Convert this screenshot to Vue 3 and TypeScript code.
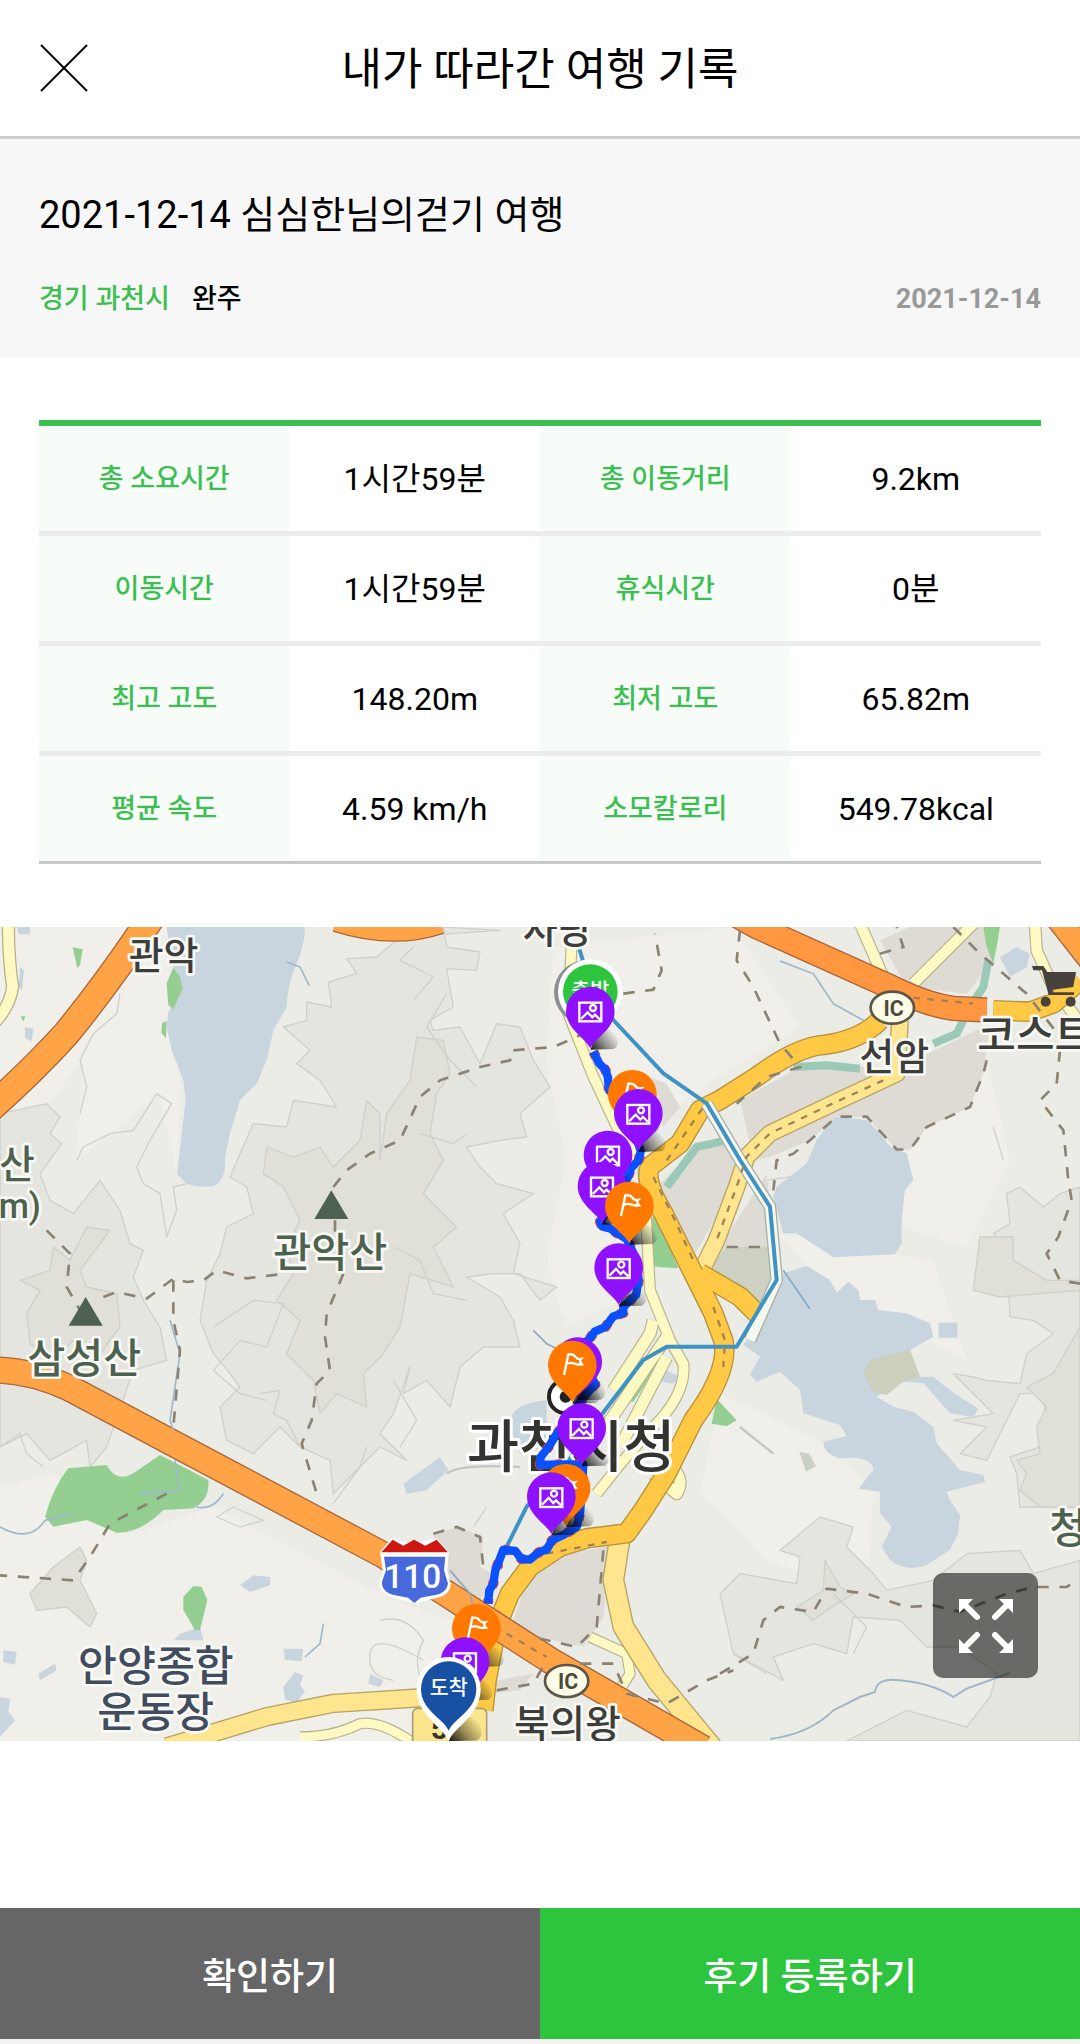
<script setup lang="ts">
interface Stat {
  label: string
  value: string
}

type PinKind = 'photo' | 'flag'

interface Pin {
  kind: PinKind
  x: number
  y: number
}

const stats: [Stat, Stat][] = [
  [{ label: '총 소요시간', value: '1시간59분' }, { label: '총 이동거리', value: '9.2km' }],
  [{ label: '이동시간', value: '1시간59분' }, { label: '휴식시간', value: '0분' }],
  [{ label: '최고 고도', value: '148.20m' }, { label: '최저 고도', value: '65.82m' }],
  [{ label: '평균 속도', value: '4.59 km/h' }, { label: '소모칼로리', value: '549.78kcal' }],
]

// Tip of each pin, in map units, in painting order
const pins: Pin[] = [
  { kind: 'photo', x: 1771, y: 364 },
  { kind: 'flag', x: 1897, y: 614 },
  { kind: 'photo', x: 1915, y: 671 },
  { kind: 'photo', x: 1824, y: 796 },
  { kind: 'photo', x: 1806, y: 889 },
  { kind: 'flag', x: 1888, y: 949 },
  { kind: 'photo', x: 1856, y: 1134 },
  { kind: 'photo', x: 1733, y: 1416 },
  { kind: 'flag', x: 1717, y: 1426 },
  { kind: 'photo', x: 1745, y: 1614 },
  { kind: 'flag', x: 1698, y: 1796 },
  { kind: 'photo', x: 1654, y: 1821 },
  { kind: 'flag', x: 1429, y: 2216 },
  { kind: 'photo', x: 1395, y: 2316 },
]

const route =
  'M1780 374 L1798 410 1816 428 1824 452 1826 484 1850 520 1900 600 1922 672 1916 700 1894 722 1884 750 1850 810 1800 884 1806 898 1830 904 1850 918 1880 936 1910 1000 1916 1060 1908 1104 1870 1140 1870 1158 1840 1168 1816 1200 1784 1214 1768 1236 1740 1260 1750 1300 1786 1372 1760 1400 1700 1480 1664 1530 1646 1560 1622 1590 1620 1614 1680 1612 1750 1612 1746 1680 1740 1760 1730 1800 1690 1824 1656 1840 1640 1868 1616 1876 1590 1898 1564 1896 1546 1872 1510 1868 1498 1900 1486 1930 1480 1970 1468 1990 1464 2030'
</script>

<template>
  <div class="page">
    <header class="top">
      <button class="close" type="button" aria-label="닫기">
        <svg viewBox="0 0 48 48" aria-hidden="true"><path d="M1 1L47 47M47 1L1 47" /></svg>
      </button>
      <h1>내가 따라간 여행 기록</h1>
    </header>

    <section class="summary">
      <h2>2021-12-14 심심한님의걷기 여행</h2>
      <div class="meta">
        <span class="region">경기 과천시</span>
        <span class="state">완주</span>
        <time datetime="2021-12-14">2021-12-14</time>
      </div>
    </section>

    <table class="stats">
      <tbody>
        <tr v-for="(row, i) in stats" :key="i">
          <template v-for="cell in row" :key="cell.label">
            <th scope="row">{{ cell.label }}</th>
            <td>{{ cell.value }}</td>
          </template>
        </tr>
      </tbody>
    </table>

    <section class="map" aria-label="이동 경로">
      <svg class="canvas" viewBox="0 0 3240 2442">
        <defs>
          <linearGradient id="shade" x1="0" y1="1" x2="1" y2="0.4">
            <stop offset="0" stop-color="#000" stop-opacity="0.9" />
            <stop offset="0.5" stop-color="#000" stop-opacity="0.4" />
            <stop offset="1" stop-color="#000" stop-opacity="0" />
          </linearGradient>
          <path id="drop" d="M0 0C-12 -28 -73 -58 -73 -112A73 73 0 1 1 73 -112C73 -58 12 -28 0 0Z" />
          <path id="cast" d="M0 4L70 2Q92 -10 76 -40Q60 -58 40 -60L20 -44Z" fill="url(#shade)" />
        </defs>
        <rect width="3240" height="2442" fill="#ebece6" />

        <!-- lowland tints -->
        <g fill="#f1efea">
          <path d="M0 0H500L520 260 540 480 530 740 480 500 300 640 230 700 250 400 120 560 0 580Z" />
          <path d="M1660 60L2200 0 2400 300 2140 460 1900 640 1900 1100 1700 1200 1640 1000 1700 700 1640 400Z" />
          <path d="M2700 600L2960 400 3030 700 2900 960 2700 900ZM2330 920L2800 1000 2900 1300 2500 1100Z" />
          <path d="M0 1680L160 1640 400 1820 640 1740 1140 2000 1400 2100 1300 2442H0Z" />
          <path d="M2160 1400L2500 1560 2620 1700 2600 2000 2300 1900 2100 1700Z" />
        </g>

        <!-- hills -->
        <g class="contour" fill="#e5e5df">
          <path d="M1500 10L1330 0 1340 60 1440 75 1430 130 1340 125 1360 240 1290 280 1300 310 1380 300 1440 410 1490 290 1560 300 1600 400 1650 480 1560 560 1580 630 1500 640 1400 660 1440 720 1490 770 1600 800 1510 860 1560 950 1540 1040 1670 1080 1620 1120 1560 1040 1480 1040 1400 1050 1500 1110 1540 1180 1560 1260 1450 1260 1380 1320 1350 1440 1280 1360 1210 1400 1230 1320 1180 1460 1140 1520 1220 1600 1140 1560 1080 1620 1000 1700 990 1600 900 1560 840 1500 760 1580 680 1540 660 1440 720 1380 690 1340 640 1280 600 1180 620 1060 660 980 680 900 760 860 740 780 690 750 720 680 760 590 860 600 880 520 1010 540 960 460 890 410 930 370 850 300 920 280 920 225 995 240 985 165 1070 140 1040 95 1130 90 1200 30Z" />
          <path d="M0 560L140 530 180 570 150 620 185 650 120 740 150 820 220 860 300 760 360 850 390 950 430 970 400 1050 430 1120 480 1200 500 1300 400 1330 320 1560 270 1620 260 1540 150 1600 80 1520 0 1560Z" />
          <path d="M2160 2000L2220 1940 2390 1970 2400 1890 2340 1870 2400 1820 2460 1770 2560 1800 2540 1860 2620 1940 2660 1990 2800 1960 2900 1880 3060 1870 3100 1940 3240 1900V2442H2540L2720 2350 2900 2400 2970 2310 2990 2240 2880 2160 2780 2160 2700 2080 2560 2070 2540 2180 2440 2150 2320 2190 2350 2260 2200 2180Z" />
          <path d="M2860 1340L2920 1350 2960 1360 3060 1370 3080 1280 3160 1220 3100 1180 3030 1170 3020 960 2980 920 3030 890 3020 800 3060 780 3130 840 3180 800 3240 780V1740H3060L3050 1640 3030 1590 3120 1560 3140 1400 3060 1400 2960 1600 2880 1580 2960 1500 2860 1480 2980 1460Z" />
        </g>
        <g class="contour" fill="#e0e0d9">
          <path d="M1140 700L1160 560 1230 460 1250 330 1330 340 1350 440 1310 500 1290 620 1330 700 1270 800 1370 900 1300 960 1360 1080 1230 1040 1200 1200 1150 1280 1090 1340 1100 1440 1010 1400 960 1460 940 1360 860 1280 900 1180 830 1120 880 1040 860 960 900 880 850 780 790 740 800 660 880 690 960 660 1000 720 1080 640 1100 520 1140 560Z" />
          <path d="M80 1160L120 1090 60 1060 150 1030 160 960 210 1000 260 900 330 910 240 1030 260 1080 350 1100 360 1200 300 1280 220 1240 160 1300 90 1250Z" />
          <path d="M2940 930L3040 930 3040 1000 3140 1060 3240 1060V1090L3000 1110 2960 1100 2920 1090Z" />
          <path d="M3080 1380L3160 1340 3240 1200V1740L3120 1740 3060 1690 3080 1640 3050 1600 3120 1580 3110 1500 3140 1440Z" />
          <path d="M90 2000L160 1920 240 1860 260 1900 240 1960 290 2060 270 2100 200 2040 110 2050Z" />
          <path d="M2470 1990L2475 1900 2520 1980 2560 2000 2480 2050 2440 2080 2390 2040Z" />
        </g>
        <g class="contour" fill="none">
          <path d="M240 560L260 480 240 400 280 320 350 260 360 200M230 700L250 660 330 620 400 610 470 500 515 530 450 640 410 720 430 770 480 800 500 930 530 850 520 780 560 770" />
          <path d="M1340 200L1280 300 1350 400 1430 480M1260 620L1360 650 1400 620M1180 960L1260 1000 1300 1100 1400 1120M1420 1800L1460 1740M1240 220L1300 150 1200 100 1240 60" />
          <path d="M640 1200L760 1120 850 1130 800 1260 720 1240 640 1330 720 1400 800 1420M0 1560L60 1520 80 1580 130 1620M1000 1730L1080 1620 1100 1560M650 1770L700 1740 790 1780 720 1800Z" />
          <path d="M900 1560L860 1480 820 1460 840 1390 780 1400M1180 1360L1250 1480 1200 1560M2200 2180L2300 2240M2980 600L3010 700" />
          <path d="M2300 760L2430 740M2500 2000L2600 2100 2560 2180M1270 2200Q1100 2100 1110 2200Q1110 2250 1180 2260M1140 2080Q1220 2060 1270 2140Q1230 2220 1280 2280" />
        </g>

        <!-- water -->
        <g fill="#c8d5df">
          <path d="M500 0L915 0Q915 50 890 110Q862 170 860 240L820 310 800 400 770 470 720 520 690 620 675 690Q680 762 640 777Q600 784 560 770L532 742 545 620 557 520 550 460 515 370 500 300 505 255 545 190 520 120Z" />
          <path d="M2505 569L2600 579 2640 619 2670 659 2720 679 2740 759 2715 789 2705 879 2705 949 2685 982 2500 991 2390 919 2350 919 2320 809 2330 779 2420 709 2450 639Z" />
          <path d="M2350 1039L2420 1017 2490 1059 2510 1097 2545 1064 2575 1089 2580 1119 2625 1119 2635 1149 2720 1159 2790 1189 2800 1229 2730 1269 2760 1349 2800 1349 2850 1390 2935 1445 2920 1470 2850 1459 2770 1369 2710 1364 2630 1409 2680 1439 2740 1454 2800 1499 2810 1549 2880 1629 2950 1644 2955 1665 2840 1694 2850 1719 2880 1764 2875 1819 2850 1869 2780 1914Q2720 1938 2670 1899L2645 1859 2675 1799 2640 1759 2640 1694 2575 1685 2620 1629Q2615 1585 2520 1594Q2470 1580 2470 1544L2540 1527 2520 1494 2410 1459 2400 1389 2340 1334 2270 1364 2250 1344 2280 1289 2230 1254 2290 1169Z" />
          <path d="M2815 1187H2872V1232H2815ZM50 0H90V22H55ZM75 300l25 5-5 38-20-10ZM60 120l12 10-6 60-10-10Z" />
          <path d="M720 1975L760 1945 810 1950 810 1975 750 1995ZM10 2170l40 5-5 38-35-8ZM115 2240l50-30 5 20-50 30ZM850 2165l60 0-5 38-50-5ZM850 2280l35-45 25 10-10 30 15 18-25 35-35-10ZM0 2310l30 5-5 40 20 25-45 50ZM540 2120l60-20 10 40-90 0ZM1110 2240l40 20-10 20-35-10Z" />
          <path d="M1210 1670L1320 1590 1345 1630 1280 1690 1220 1700ZM1530 1500Q1520 1430 1640 1420L1640 1560 1560 1580ZM1950 1330l30-10 60 30-20 20-60-10ZM3000 90l50-30 40 20-10 40-50 30Z" />
        </g>
        <path d="M2730 1269L2760 1349 2710 1364 2660 1404 2620 1394 2590 1339 2610 1299Z" fill="#cdcfbd" />
        <path d="M2398 1574l30 6 20 38-30 16Z" fill="#cbcfc4" />

        <!-- built-up blocks -->
        <g fill="#dedbd5">
          <path d="M1980 770L2070 680 2180 620 2230 730 2080 990ZM2160 960L2300 740 2320 900 2330 1060 2280 1140 2110 1060Z" />
          <path d="M2220 520L2400 420 2700 420 2970 290 2950 440 2910 540 2780 600 2730 668 2690 667 2600 569 2510 569 2430 640 2310 690 2260 700Z" />
          <path d="M2640 40L2730 0 2960 0 2980 100 2900 200 2720 180ZM1920 440L2000 470 2040 540 1990 600Z" />
          <path d="M1690 1880L1830 1858 1810 2070 1750 2160 1530 2110 1580 1960ZM1300 1820L1380 1800 1450 1830 1440 1920 1480 1940 1420 2060 1340 1960ZM1490 2260L1600 2240 1560 2290 1480 2300Z" />
        </g>
        <path d="M2180 960L2310 960 2310 1060 2280 1130 2110 1040Z" fill="#ccd1c3" />

        <!-- greenery -->
        <g fill="#94cf91">
          <path d="M520 122L540 149 548 184 520 247 505 234 500 169ZM218 61l30 6-8 48-8 8ZM486 288l14-6-2 52-14-16ZM62 268l14 0-6 16Z" />
          <path d="M205 1624L320 1614Q350 1669 400 1639L480 1584 625 1659Q630 1719 580 1744L490 1749Q420 1819 350 1817L260 1779 160 1799 135 1769Q160 1679 205 1624Z" />
          <path d="M550 2009L580 1977 605 1979 622 2019 600 2109 585 2109 550 2049Z" />
          <path d="M1930 960L1965 850 2035 1024Q1990 1022 1930 1015ZM2135 1490L2150 1415 2210 1480 2180 1498ZM1870 1420L1980 1280 1990 1290 1900 1424Z" />
          <path d="M2950 0L3000 0 2990 60 2980 110 2960 60Z" />
        </g>
        <path d="M2965 100L2950 180 2910 240 2870 320 2800 350M2380 420L2480 415 2580 425M2180 640L2090 660 2000 780" class="creek" />

        <!-- roads: casings first, then fills -->
        <g class="road">
          <g stroke="#b9b391">
            <path d="M25 -20Q25 99 38 179Q30 240 -20 290" stroke-width="40" />
            <path d="M1715 50L1705 260 1780 449 1860 619 1930 719 1950 1090 2010 1240 2050 1310Q2060 1400 1960 1500L1870 1600 1790 1700" stroke-width="36" />
            <path d="M1840 1390L1950 1220 1960 1180M1810 1510L2000 1230M1860 1560L2000 1290M1960 1640L2030 1700Q2060 1650 2000 1610" stroke-width="40" />
            <path d="M2580 -10L2650 150M2920 -10L2740 170M3105 -10L3110 70 3150 160 3240 290" stroke-width="38" />
            <path d="M900 2430Q1000 2430 1080 2390Q1140 2380 1230 2442M1770 2130L1880 2180 1890 2240 1840 2320" stroke-width="34" />
          </g>
          <g stroke="#fdf9c2">
            <path d="M25 -20Q25 99 38 179Q30 240 -20 290" stroke-width="32" />
            <path d="M1715 50L1705 260 1780 449 1860 619 1930 719 1950 1090 2010 1240 2050 1310Q2060 1400 1960 1500L1870 1600 1790 1700" stroke-width="29" />
            <path d="M1840 1390L1950 1220 1960 1180M1810 1510L2000 1230M1860 1560L2000 1290M1960 1640L2030 1700Q2060 1650 2000 1610" stroke-width="33" />
            <path d="M2580 -10L2650 150M2920 -10L2740 170M3105 -10L3110 70 3150 160 3240 290" stroke-width="31" />
            <path d="M900 2430Q1000 2430 1080 2390Q1140 2380 1230 2442M1770 2130L1880 2180 1890 2240 1840 2320" stroke-width="27" />
          </g>
          <g stroke="#b7a566">
            <path d="M2700 280L2690 440 2510 524 2310 619 2240 689 2210 779 2150 939 2090 1060" stroke-width="54" />
            <path d="M1860 1830L1840 1959 1870 2099 1970 2259 2160 2490" stroke-width="66" />
            <path d="M500 2460L800 2369 1000 2329 1300 2310" stroke-width="58" />
          </g>
          <g stroke="#ffe68e">
            <path d="M2700 280L2690 440 2510 524 2310 619 2240 689 2210 779 2150 939 2090 1060" stroke-width="46" />
            <path d="M1860 1830L1840 1959 1870 2099 1970 2259 2160 2490" stroke-width="58" />
            <path d="M500 2460L800 2369 1000 2329 1300 2310" stroke-width="50" />
          </g>
          <path d="M3240 160L3160 229 3090 254 2980 250M2640 280Q2580 340 2470 354Q2390 360 2270 449L2160 519 2100 549 2040 649 1950 719Q1930 760 1990 859L2080 1039 2140 1159 2170 1240Q2190 1330 2080 1479L2000 1639 1930 1749 1880 1819 1760 1834 1680 1859 1590 1919 1530 1999 1490 2099 1460 2259 1450 2350M2100 1039L2220 1109 2280 1169" stroke="#b5923c" stroke-width="62" />
          <path d="M3240 160L3160 229 3090 254 2980 250M2640 280Q2580 340 2470 354Q2390 360 2270 449L2160 519 2100 549 2040 649 1950 719Q1930 760 1990 859L2080 1039 2140 1159 2170 1240Q2190 1330 2080 1479L2000 1639 1930 1749 1880 1819 1760 1834 1680 1859 1590 1919 1530 1999 1490 2099 1460 2259 1450 2350M2100 1039L2220 1109 2280 1169" stroke="#ffc945" stroke-width="54" />
          <g stroke="#a9673a">
            <path d="M455 -30Q330 159 200 319Q100 429 -30 545" stroke-width="86" />
            <path d="M-20 1329Q90 1329 210 1384L520 1549 1150 1884 1340 2000 1510 2110 1650 2200 1900 2344 2110 2465" stroke-width="82" />
            <path d="M2200 -40L2270 -1 2670 179Q2780 234 2860 244L2960 249M3170 -30L3280 110M1010 -22Q1180 32 1320 -16" stroke-width="76" />
          </g>
          <g stroke="#ffa347">
            <path d="M455 -30Q330 159 200 319Q100 429 -30 545" stroke-width="78" />
            <path d="M-20 1329Q90 1329 210 1384L520 1549 1150 1884 1340 2000 1510 2110 1650 2200 1900 2344 2110 2465" stroke-width="74" />
            <path d="M3170 -30L3280 110M1010 -22Q1180 32 1320 -16" stroke-width="68" />
            <path d="M2200 -40L2270 -1 2670 179Q2780 234 2860 244L2960 249" stroke="#ff9640" stroke-width="68" />
          </g>
        </g>

        <!-- railway, streams -->
        <g class="line">
          <path d="M2120 530L2220 699 2310 839 2330 1059 2250 1240" stroke="#a9b0a4" stroke-width="38" />
          <path d="M2120 530L2220 699 2310 839 2330 1059 2250 1240" stroke="#f4f8ee" stroke-width="30" />
          <path d="M1738 66L1770 170 1840 279 1990 439 2120 529 2220 699 2310 839 2330 1059 2210 1259 2000 1259 1930 1299 1800 1469 1700 1609 1580 1739 1510 1879" stroke="#3f92c4" stroke-width="12" />
          <path d="M2350 1030L2430 1146" stroke="#7fabc8" stroke-width="5" />
          <path d="M2340 102L2440 140 2500 230 2590 280M510 1180L540 1280 510 1480 520 1510M525 1600L540 1690 420 1700M0 1800Q90 1850 135 1780L220 1760M590 1740Q640 1750 670 1700M970 2090L960 2150 915 2190M860 105L900 120 928 176" stroke="#9db8cc" stroke-width="5" />
          <path d="M2310 2436Q2430 2420 2500 2350L2580 2310 2625 2295Q2630 2250 2700 2260Q2800 2270 2860 2310L2900 2285 3030 2238" stroke="#9fb6ca" stroke-width="6" />
          <path d="M1600 1210L1640 1250 1680 1270M1350 1930L1410 2000 1430 2080" stroke="#8fa8c0" stroke-width="5" />
          <path d="M1340 1640Q1380 1610 1560 1620M2220 1500L2320 1580" stroke="#c5c5c3" stroke-width="7" />
        </g>

        <!-- hiking trails -->
        <g class="trail">
          <path d="M1000 780L1040 730 1110 680 1200 640 1260 510 1320 460 1440 420 1530 400 1540 370M1540 370L1660 360 1740 325M1870 200L1960 188 1985 130 1965 20" />
          <path d="M140 910L210 980 200 1080 240 1150M310 1110L350 1095 440 1115 520 1055 560 1065 610 1060 650 1030 740 1054 840 1042M1005 880V940M1030 1040L980 1160 975 1230 990 1330 950 1370 935 1480 905 1550 950 1700" />
          <path d="M520 1060L520 1180 540 1270 520 1500M500 1700L330 1790 270 1890 220 1960 0 1945" />
          <path d="M2220 10L2210 100 2260 180 2340 350 2400 420 2300 450 2210 530M3180 370L3170 470 3120 520 3190 610 3205 760 3215 820 3175 930 3140 980 3180 1060 3240 1070" />
          <path d="M2960 400L2950 440 2910 540 2780 600 2730 668 2690 667 2600 569 2510 569 2430 640 2380 680 2330 700 2320 790M2180 960H2290M2640 80L2710 60 2690 0M2860 0L2940 80 3080 200 3180 330" />
          <path d="M2160 2240L2260 2180 2290 2080 2340 2040 2440 2055 2480 1985 2600 2000 2720 2040 2800 2035 2880 2055 3020 2000 3100 1980 3200 1980 3230 1960M1490 2290L1600 2270 1640 2200M1300 1820L1370 1800 1440 1830 1450 1920 1540 1920M1810 1870L1790 2100 1730 2160 1600 2130M1740 2210L1840 2210 1880 2300 2000 2330 2120 2260 2200 2230" />
        </g>
        <g class="tie">
          <path d="M2650 460L2510 524 2310 619 2240 689 2210 779 2150 939M1960 750L2020 870 2080 1000M2140 1140L2175 1240 2170 1320M2000 700L2110 540M1520 2120L1640 2190M1640 1880L1820 1845M2740 212L2920 230" />
        </g>

        <!-- place names -->
        <g class="names">
          <g fill="#3d3d3a">
            <text x="386" y="126" font-size="114">관악</text>
            <text x="1568" y="47" font-size="114">사당</text>
            <text x="2578" y="429" font-size="114">선암</text>
            <text x="2932" y="369" font-size="126">코스트</text>
            <text x="1542" y="2432" font-size="116">북의왕</text>
          </g>
          <g fill="#4d614f">
            <text x="-2" y="754" font-size="116">산</text>
            <text x="-4" y="874" font-size="104">m)</text>
            <text x="820" y="1021" font-size="124">관악산</text>
            <text x="82" y="1338" font-size="124">삼성산</text>
            <text x="3148" y="1848" font-size="124">청</text>
          </g>
          <g fill="#414c5e">
            <text x="234" y="2261" font-size="127">안양종합</text>
            <text x="292" y="2401" font-size="127">운동장</text>
          </g>
          <path d="M994 790L1045 876H943ZM257 1110L308 1196H206Z" fill="#4c614f" stroke="none" />
        </g>
        <circle cx="1697" cy="1409" r="50" fill="#fff" stroke="#222" stroke-width="12" />
        <circle cx="1697" cy="1409" r="18" fill="#222" />
        <text class="city" x="1401" y="1620">과천시청</text>

        <!-- interchange badges, cart, shields -->
        <g class="badge">
          <ellipse cx="2677" cy="242" rx="65" ry="48" />
          <text x="2681" y="266">IC</text>
          <ellipse cx="1700" cy="2262" rx="65" ry="48" />
          <text x="1704" y="2286">IC</text>
        </g>
        <g fill="#48423f">
          <path d="M3096 117H3130L3142 135H3228L3220 180 3158 188V196H3222V204H3146L3126 130H3100Z" />
          <circle cx="3137" cy="224" r="15" />
          <circle cx="3212" cy="224" r="15" />
        </g>
        <path d="M1140 1874L1175 1834 1240 1850 1310 1834 1346 1874 1342 1930 1352 1970Q1350 2005 1310 2012L1245 2030 1180 2012Q1136 2000 1138 1965L1148 1930Z" fill="#fff" />
        <path d="M1144 1876L1178 1838 1210 1856 1242 1838 1276 1856 1310 1838 1344 1876Z" fill="#cf1712" />
        <path d="M1152 1889H1336L1332 1930 1344 1970Q1340 1998 1305 2004L1262 2012 1243 2028 1224 2012 1182 2004Q1144 1994 1146 1964L1158 1930Z" fill="#4669dc" />
        <text class="route-no" x="1238" y="1984">110</text>
        <rect x="1238" y="2344" width="222" height="120" rx="16" fill="#fbe58c" stroke="#aaa07a" stroke-width="5" />
        <text class="road-no" x="1292" y="2436">5</text>

        <!-- travelled route -->
        <path :d="route" class="planned" />
        <path :d="route" class="walked" />

        <!-- start pin -->
        <circle cx="1758" cy="196" r="96" fill="#8d8f92" />
        <circle cx="1771" cy="194" r="97" fill="#fff" />
        <circle cx="1771" cy="194" r="82" fill="#2dc53d" />
        <text class="pin-text" x="1771" y="214">출발</text>

        <g v-for="(pin, i) in pins" :key="i" :transform="`translate(${pin.x} ${pin.y})`">
          <use href="#cast" />
          <use href="#drop" :fill="pin.kind === 'photo' ? '#9011ff' : '#ff7800'" />
          <g v-if="pin.kind === 'photo'" class="glyph">
            <rect x="-33" y="-137" width="66" height="56" />
            <circle cx="8" cy="-121" r="9" />
            <path d="M-28 -88L-8 -108 6 -93 14 -101 29 -86" />
          </g>
          <path v-else class="glyph" d="M-25 -82L-12 -144Q4 -146 10 -136Q16 -128 26 -130Q20 -124 29 -114Q12 -112 4 -117Q-6 -120 -16 -116" />
        </g>

        <!-- arrival pin -->
        <use href="#cast" transform="translate(1346 2438) scale(1.2)" />
        <path d="M1346 2442C1330 2400 1250 2366 1250 2286A96 96 0 1 1 1442 2286C1442 2366 1362 2400 1346 2442Z" fill="#fff" />
        <path d="M1346 2411C1330 2374 1263 2350 1263 2286A83 83 0 1 1 1429 2286C1429 2350 1362 2374 1346 2411Z" fill="#1850a4" />
        <text class="pin-text" x="1346" y="2304">도착</text>
      </svg>

      <button class="expand" type="button" aria-label="지도 확대">
        <svg viewBox="0 0 54 54" aria-hidden="true">
          <path class="shaft" d="M8 8L18 18M46 8L36 18M8 46L18 36M46 46L36 36" />
          <path class="head" d="M0 0H14L0 14ZM54 0V14L40 0ZM0 54V40L14 54ZM54 54H40L54 40Z" />
        </svg>
      </button>
    </section>

    <footer class="actions">
      <button class="confirm" type="button">확인하기</button>
      <button class="review" type="button">후기 등록하기</button>
    </footer>
  </div>
</template>

<style>
body {
  background: #fff;
}
</style>

<style scoped>
.page {
  display: flex;
  flex-direction: column;
  min-height: 100vh;
  color: #000;
  font-family: Roboto, 'Noto Sans CJK KR', sans-serif;
}

button {
  margin: 0;
  padding: 0;
  border: 0;
  font: inherit;
  cursor: pointer;
}

h1,
h2 {
  margin: 0;
  font-weight: 400;
}

.top {
  display: grid;
  grid-template-columns: 48px 1fr 48px;
  align-items: center;
  height: 136px;
  padding: 0 40px;
  border-bottom: 3px solid #ccc;
}

.top h1 {
  padding-top: 4px;
  font-size: 44px;
  line-height: 64px;
  text-align: center;
}

.close {
  width: 48px;
  height: 48px;
  background: none;
}

.close svg {
  display: block;
  width: 48px;
  height: 48px;
  fill: none;
  stroke: #000;
  stroke-width: 2;
}

.summary {
  padding: 48px 39px 38px;
  background: #f7f7f7;
}

.summary h2 {
  font-size: 38px;
  line-height: 56px;
}

.meta {
  display: flex;
  align-items: center;
  gap: 22px;
  margin-top: 36px;
  font-size: 27px;
  font-weight: 500;
  line-height: 40px;
}

.region {
  color: #3bbf50;
}

.meta time {
  margin-left: auto;
  color: #999;
  font-weight: 700;
}

.stats {
  width: calc(100% - 78px);
  margin: 63px 39px 0;
  border-collapse: separate;
  border-spacing: 0;
  border-top: 6px solid #3bbf50;
  border-bottom: 3px solid #c8c8c8;
  table-layout: fixed;
}

.stats th,
.stats td {
  height: 105px;
  padding: 0;
  line-height: 40px;
  text-align: center;
}

.stats th {
  background: #f7fcf9;
  color: #3bbf50;
  font-size: 27px;
  font-weight: 500;
}

.stats td {
  font-size: 32px;
}

.stats tr + tr th,
.stats tr + tr td {
  border-top: 5px solid #ececec;
}

.map {
  position: relative;
  margin-top: 63px;
}

.canvas {
  display: block;
  width: 100%;
  overflow: hidden;
}

.contour {
  stroke: #d0d0cb;
  stroke-width: 4;
  stroke-linejoin: round;
}

.road,
.line,
.creek {
  fill: none;
  stroke-linejoin: round;
}

.creek {
  stroke: #9bc9b8;
  stroke-width: 24;
}

.trail {
  fill: none;
  stroke: #8a8373;
  stroke-width: 8;
  stroke-dasharray: 34 32;
}

.tie {
  fill: none;
  stroke: #a08254;
  stroke-width: 7;
  stroke-dasharray: 20 22;
}

.names {
  font-weight: 500;
  paint-order: stroke;
  stroke: #f8f8f4;
  stroke-width: 16;
  stroke-linejoin: round;
}

.city {
  fill: #33332f;
  font-size: 170px;
  font-weight: 500;
  paint-order: stroke;
  stroke: #fff;
  stroke-width: 18;
  stroke-linejoin: round;
}

.badge ellipse {
  fill: #fffde8;
  stroke: #5b5646;
  stroke-width: 8;
}

.badge text {
  fill: #4d4a3c;
  font-size: 64px;
  font-weight: 700;
  text-anchor: middle;
}

.route-no {
  fill: #fff;
  font-size: 100px;
  font-weight: 500;
  text-anchor: middle;
}

.road-no {
  fill: #333;
  font-size: 90px;
  font-weight: 700;
}

.planned,
.walked {
  fill: none;
  stroke-linejoin: round;
}

.planned {
  stroke: #e8412a;
  stroke-width: 30;
  stroke-dasharray: 18 40;
}

.walked {
  stroke: #0a50ff;
  stroke-width: 25;
}

.pin-text {
  fill: #fff;
  font-size: 62px;
  font-weight: 500;
  text-anchor: middle;
}

.glyph {
  fill: none;
  stroke: #fff;
  stroke-width: 7;
}

.expand {
  position: absolute;
  right: 42px;
  bottom: 63px;
  display: flex;
  align-items: center;
  justify-content: center;
  width: 105px;
  height: 105px;
  border-radius: 10px;
  background: rgba(0, 0, 0, 0.54);
}

.expand svg {
  width: 54px;
  height: 54px;
}

.shaft {
  fill: none;
  stroke: #fff;
  stroke-width: 6;
  stroke-linecap: round;
}

.head {
  fill: #fff;
}

.actions {
  display: grid;
  grid-template-columns: 1fr 1fr;
  margin-top: auto;
  border-bottom: 5px solid #f2f2f2;
}

.actions button {
  height: 131px;
  color: #fff;
  font-size: 37px;
  font-weight: 500;
}

.confirm {
  background: #666;
}

.review {
  background: #2dc53d;
}
</style>
